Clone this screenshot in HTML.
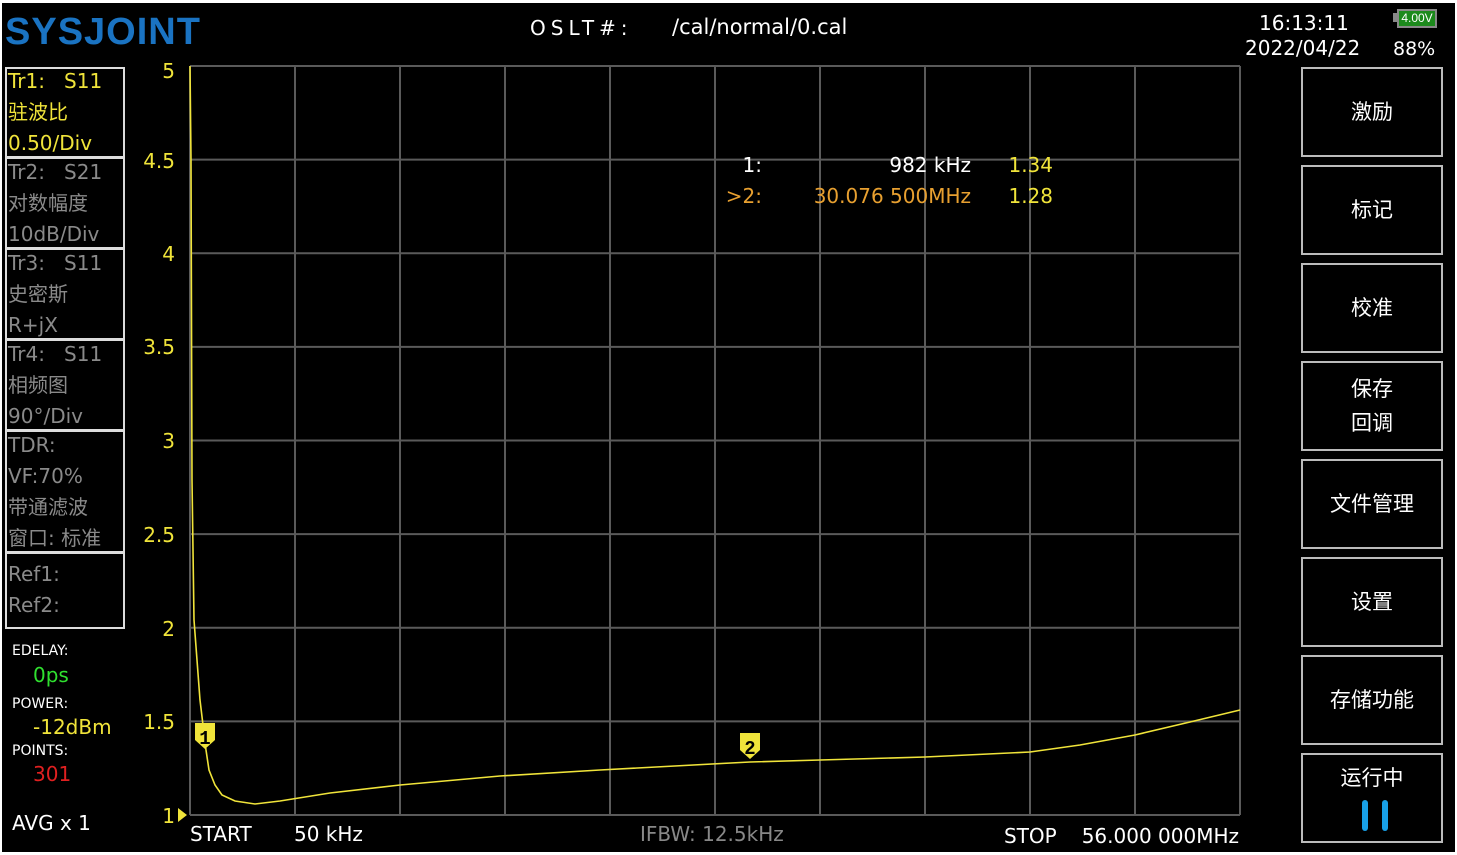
<!DOCTYPE html>
<html><head><meta charset="utf-8"><style>
html,body{margin:0;padding:0;background:#fff;}
#s{position:absolute;left:2px;top:3px;width:1453px;height:849px;background:#000;overflow:hidden;font-family:"DejaVu Sans","Noto Sans CJK SC",sans-serif;}
.a{position:absolute;white-space:nowrap;}
.box{position:absolute;left:3px;width:120px;border:2px solid #ddd;box-sizing:border-box;}
.btn{position:absolute;left:1299px;width:142px;height:90px;border:2px solid #bbb;box-sizing:border-box;color:#fff;font-size:21px;display:flex;align-items:center;justify-content:center;text-align:center;line-height:34px;}
.lt{position:absolute;left:6px;font-size:20px;line-height:31px;}
.y{color:#f0e43a}.g{color:#8a8a8a}
</style></head><body><div id="s">
<div class="a" style="left:3px;top:8px;font-size:38px;font-weight:bold;color:#1a73c2;letter-spacing:1px;font-family:'Liberation Sans',sans-serif;">SYSJOINT</div>
<div class="a" style="left:528px;top:13px;font-size:20px;color:#fff;letter-spacing:5px;">OSLT#:</div>
<div class="a" style="left:670px;top:12px;font-size:21px;color:#fff;">/cal/normal/0.cal</div>
<div class="a" style="left:1257px;top:8px;font-size:20px;color:#fff;">16:13:11</div>
<div class="a" style="left:1243px;top:33px;font-size:20px;color:#fff;">2022/04/22</div>
<div class="a" style="left:1391px;top:35px;font-size:19px;color:#fff;">88%</div>
<div class="a" style="left:1391px;top:10px;width:4px;height:9px;background:#888;"></div>
<div class="a" style="left:1395px;top:6px;width:40px;height:19px;border:2px solid #888;box-sizing:border-box;"><div style="background:#1c8a1c;height:100%;color:#fff;font-size:12px;line-height:15px;text-align:center;font-family:'Liberation Sans',sans-serif;">4.00V</div></div>

<div class="box" style="top:64px;height:91px;"></div>
<div class="box" style="top:154px;height:92px;"></div>
<div class="box" style="top:245px;height:92px;"></div>
<div class="box" style="top:336px;height:92px;"></div>
<div class="box" style="top:427px;height:123px;"></div>
<div class="box" style="top:549px;height:77px;"></div>
<div class="lt y" style="top:63px;">Tr1:&nbsp;&nbsp;&nbsp;S11<br>驻波比<br>0.50/Div</div>
<div class="lt g" style="top:154px;">Tr2:&nbsp;&nbsp;&nbsp;S21<br>对数幅度<br>10dB/Div</div>
<div class="lt g" style="top:245px;">Tr3:&nbsp;&nbsp;&nbsp;S11<br>史密斯<br>R+jX</div>
<div class="lt g" style="top:336px;">Tr4:&nbsp;&nbsp;&nbsp;S11<br>相频图<br>90°/Div</div>
<div class="lt g" style="top:427px;">TDR:<br>VF:70%<br>带通滤波<br>窗口: 标准</div>
<div class="lt g" style="top:556px;">Ref1:<br>Ref2:</div>
<div class="a" style="left:10px;top:640px;font-size:14px;color:#fff;">EDELAY:</div>
<div class="a" style="left:31px;top:660px;font-size:20px;color:#2fe02f;">0ps</div>
<div class="a" style="left:10px;top:693px;font-size:14px;color:#fff;">POWER:</div>
<div class="a" style="left:31px;top:712px;font-size:20px;color:#f0e43a;">-12dBm</div>
<div class="a" style="left:10px;top:740px;font-size:14px;color:#fff;">POINTS:</div>
<div class="a" style="left:31px;top:759px;font-size:20px;color:#e02020;">301</div>
<div class="a" style="left:10px;top:808px;font-size:20px;color:#fff;">AVG x 1</div>

<div class="btn" style="top:64px;">激励</div>
<div class="btn" style="top:162px;">标记</div>
<div class="btn" style="top:260px;">校准</div>
<div class="btn" style="top:358px;">保存<br>回调</div>
<div class="btn" style="top:456px;">文件管理</div>
<div class="btn" style="top:554px;">设置</div>
<div class="btn" style="top:652px;">存储功能</div>
<div class="btn" style="top:750px;align-items:flex-start;padding-top:6px;">运行中</div>
<div class="a" style="left:1360px;top:797px;width:6px;height:31px;border-radius:3px;background:#18a0e8;"></div>
<div class="a" style="left:1380px;top:797px;width:6px;height:31px;border-radius:3px;background:#18a0e8;"></div>

<svg class="a" style="left:-2px;top:-3px;" width="1457" height="855">
<g stroke="#5a5a5a" stroke-width="2" fill="none">
<path d="M190 66V815M295 66V815M400 66V815M505 66V815M610 66V815M715 66V815M820 66V815M925 66V815M1030 66V815M1135 66V815M1240 66V815"/>
<path d="M190 66H1240M190 159.6H1240M190 253.3H1240M190 346.9H1240M190 440.5H1240M190 534.1H1240M190 627.8H1240M190 721.4H1240M190 815H1240"/>
</g>
<polyline fill="none" stroke="#f0e43a" stroke-width="1.6" points="190,66 191,160 192,480 194,620 200,700 206,750 209,770 215,785 222,795 235,801 255,804 280,801 330,793 400,785 500,776 600,770 750,762 820,760 925,757 1030,752 1080,745 1135,735 1190,722 1240,710"/>
<path d="M195 723h20v17l-10 9l-10-9z" fill="#f0e43a"/>
<text x="205" y="744" font-size="19" font-weight="bold" text-anchor="middle" fill="#000" font-family="Liberation Mono,monospace">1</text>
<path d="M740 733h20v17l-10 9l-10-9z" fill="#f0e43a"/>
<text x="750" y="754" font-size="19" font-weight="bold" text-anchor="middle" fill="#000" font-family="Liberation Mono,monospace">2</text>
<path d="M178 808l9 7l-9 7z" fill="#f0e43a"/>
<g font-family="DejaVu Sans,sans-serif" font-size="20" fill="#f0e43a" text-anchor="end">
<text x="175" y="78">5</text><text x="175" y="168">4.5</text><text x="175" y="261">4</text><text x="175" y="354">3.5</text><text x="175" y="448">3</text><text x="175" y="542">2.5</text><text x="175" y="636">2</text><text x="175" y="729">1.5</text><text x="175" y="823">1</text>
</g>
<g font-family="DejaVu Sans,sans-serif" font-size="20">
<text x="190" y="841" fill="#fff">START</text>
<text x="294" y="841" fill="#fff">50 kHz</text>
<text x="640" y="841" fill="#888">IFBW: 12.5kHz</text>
<text x="1004" y="843" fill="#fff">STOP</text>
<text x="1239" y="843" fill="#fff" text-anchor="end">56.000 000MHz</text>
<text x="762" y="172" fill="#fff" text-anchor="end">1:</text>
<text x="971" y="172" fill="#fff" text-anchor="end">982 kHz</text>
<text x="1053" y="172" fill="#f0e43a" text-anchor="end">1.34</text>
<text x="762" y="203" fill="#e8a030" text-anchor="end">&gt;2:</text>
<text x="971" y="203" fill="#e8a030" text-anchor="end">30.076 500MHz</text>
<text x="1053" y="203" fill="#f0e43a" text-anchor="end">1.28</text>
</g>
</svg>
</div></body></html>
